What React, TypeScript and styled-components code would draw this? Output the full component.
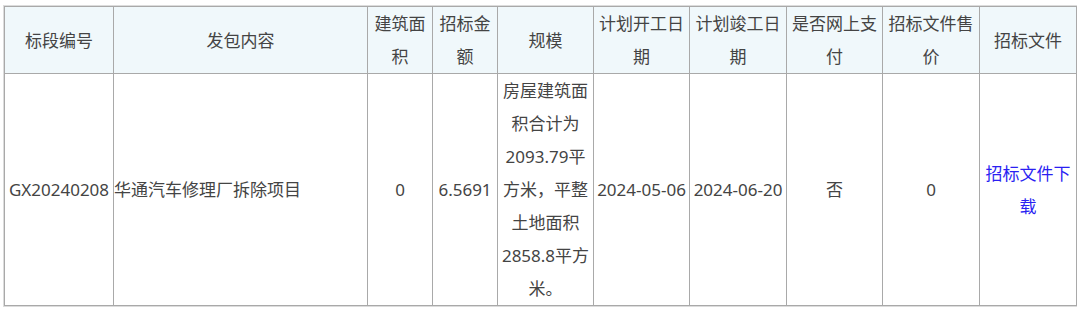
import React from 'react';
import styled, { createGlobalStyle } from 'styled-components';

const GlobalStyle = createGlobalStyle`
  html, body {
    margin: 0;
    padding: 0;
    background: #ffffff;
  }
  body {
    font-family: "Noto Sans", "Noto Sans CJK SC", sans-serif;
  }
`;

const Frame = styled.div`
  margin: 5px 0 0 3px;
  width: 1072px;
  border: 1px solid #dcdcdc;
`;

const Table = styled.table`
  width: 1072px;
  border-collapse: collapse;
  table-layout: fixed;
  font-size: 17px;
  line-height: 33px;
  color: #444444;
`;

const HeadCell = styled.th`
  background: #f0f8fb;
  border: 1px solid #a9a9a9;
  font-weight: normal;
  text-align: center;
  vertical-align: middle;
  padding: 0 1px;
  height: 66px;
`;

const Cell = styled.td<{ $align?: 'left' | 'center' }>`
  border: 1px solid #a9a9a9;
  text-align: ${(p) => p.$align || 'center'};
  vertical-align: middle;
  padding: 0 ${(p) => (p.$align === 'left' ? '0' : '1px')};
  height: 231px;
`;

const DownloadLink = styled.a`
  color: #2b1ff2;
  text-decoration: none;
  cursor: pointer;
`;

const columns = [
  { title: '标段编号', width: 109 },
  { title: '发包内容', width: 254 },
  { title: '建筑面积', width: 65 },
  { title: '招标金额', width: 65 },
  { title: '规模', width: 96 },
  { title: '计划开工日期', width: 96 },
  { title: '计划竣工日期', width: 97 },
  { title: '是否网上支付', width: 96 },
  { title: '招标文件售价', width: 97 },
  { title: '招标文件', width: 97 },
];

const App: React.FC = () => {
  return (
    <>
      <GlobalStyle />
      <Frame>
        <Table>
          <colgroup>
            {columns.map((c) => (
              <col key={c.title} style={{ width: c.width }} />
            ))}
          </colgroup>
          <thead>
            <tr>
              {columns.map((c) => (
                <HeadCell key={c.title}>{c.title}</HeadCell>
              ))}
            </tr>
          </thead>
          <tbody>
            <tr>
              <Cell>GX20240208</Cell>
              <Cell $align="left">华通汽车修理厂拆除项目</Cell>
              <Cell>0</Cell>
              <Cell>6.5691</Cell>
              <Cell>房屋建筑面积合计为2093.79平方米，平整土地面积2858.8平方米。</Cell>
              <Cell>2024-05-06</Cell>
              <Cell>2024-06-20</Cell>
              <Cell>否</Cell>
              <Cell>0</Cell>
              <Cell>
                <DownloadLink>招标文件下载</DownloadLink>
              </Cell>
            </tr>
          </tbody>
        </Table>
      </Frame>
    </>
  );
};

export default App;
